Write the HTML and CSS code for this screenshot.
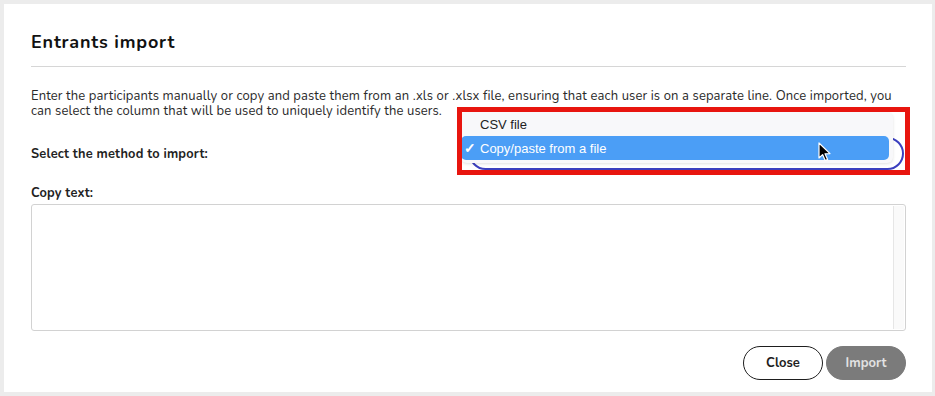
FILE: index.html
```html
<!DOCTYPE html>
<html>
<head>
<meta charset="utf-8">
<link rel="stylesheet" href="styles.css">
</head>
<body>
<div class="modal">
  <div class="header"><h1 class="title">Entrants import</h1></div>
  <p class="intro">Enter the participants manually or copy and paste them from an .xls or .xlsx file, ensuring that each user is on a separate line. Once imported, you can select the column that will be used to uniquely identify the users.</p>
  <div class="method-row">
    <label class="label">Select the method to import:</label>
    <div class="select"></div>
  </div>
  <label class="label copy-label">Copy text:</label>
  <div class="textarea"><div class="track"></div></div>
  <div class="footer">
    <button class="btn btn-close">Close</button>
    <button class="btn btn-import">Import</button>
  </div>

  <div class="popup">
    <div class="option">CSV file</div>
    <div class="option selected"><span class="check">✓</span>Copy/paste from a file</div>
  </div>
  <div class="annotation"></div>
  <svg class="cursor" width="14" height="20" viewBox="0 0 14 20"><path d="M1 1 L1 16 L4.6 12.6 L7.2 18.6 L9.6 17.6 L7 11.8 L12 11.6 Z" fill="#000" stroke="#fff" stroke-width="1.2" stroke-linejoin="round"/></svg>
</div>
</body>
</html>
```
FILE: styles.css
```css
html, body { margin: 0; padding: 0; }
body {
  background: #ececec;
  width: 935px;
  height: 396px;
  overflow: hidden;
  font-family: "Nunito", "Noto Sans", sans-serif;
  color: #222;
}
.modal {
  position: relative;
  margin: 4px 3px 0 4px;
  height: 388px;
  background: #fff;
  padding: 0 26px 0 27px;
  box-sizing: border-box;
  display: flex;
  flex-direction: column;
}
.header {
  padding-top: 26px;
  padding-bottom: 12px;
  border-bottom: 1px solid #d6d6d6;
}
.title {
  margin: 0;
  font-size: 18px;
  line-height: 24px;
  font-weight: 700;
  letter-spacing: 0.8px;
  color: #111;
}
.intro {
  margin: 22px 0 0 0;
  font-size: 13px;
  line-height: 15px;
  letter-spacing: 0.12px;
  color: #2a2a2a;
}
.method-row {
  margin-top: 18px;
  display: grid;
  grid-template-columns: 1fr 1fr;
  align-items: center;
}
.label {
  font-size: 12.8px;
  font-weight: 700;
  letter-spacing: 0.2px;
  color: #222;
  line-height: 16px;
}
.select {
  height: 33px;
  box-sizing: border-box;
  border: 2px solid #3b3fbf;
  border-radius: 17px;
  margin-right: 2px;
}
.copy-label {
  display: block;
  margin-top: 15px;
  margin-bottom: 3px;
}
.textarea {
  height: 127px;
  box-sizing: border-box;
  border: 1px solid #d2d2d2;
  border-radius: 3px;
  display: flex;
  justify-content: flex-end;
  padding: 1px 1px 1px 0;
}
.track {
  width: 10px;
  background: #fafafa;
  border-left: 1px solid #e6e6e6;
}
.footer {
  margin-top: 15px;
  display: flex;
  justify-content: flex-end;
  gap: 3px;
}
.btn {
  width: 80px;
  height: 34px;
  border-radius: 17px;
  font-family: inherit;
  font-size: 13px;
  font-weight: 700;
  padding: 0;
}
.btn-close {
  background: #fff;
  border: 1px solid #1e1e1e;
  color: #1e1e1e;
}
.btn-import {
  background: #7b7b7b;
  border: 1px solid #7b7b7b;
  color: #e2e2e2;
}
.popup {
  position: absolute;
  left: 457px;
  top: 108px;
  width: 432px;
  height: 51px;
  background: #f8f8fa;
  border-radius: 6px;
  box-shadow: 0 1px 3px rgba(0,0,0,0.12);
  font-family: "Liberation Sans", Arial, sans-serif;
  font-size: 13px;
  box-sizing: border-box;
}
.option {
  height: 24px;
  line-height: 25px;
  padding-left: 19px;
  color: #222;
}
.option.selected {
  background: #4b9ef6;
  color: #fff;
  border-radius: 5px;
  width: 428px;
  padding-left: 3px;
  box-sizing: border-box;
}
.check {
  display: inline-block;
  width: 16px;
  font-size: 14px;
  font-weight: 700;
}
.annotation {
  position: absolute;
  left: 453px;
  top: 103px;
  width: 453px;
  height: 68px;
  box-sizing: border-box;
  border: 5px solid #e8150f;
}
.cursor {
  position: absolute;
  left: 814px;
  top: 138px;
}
```
